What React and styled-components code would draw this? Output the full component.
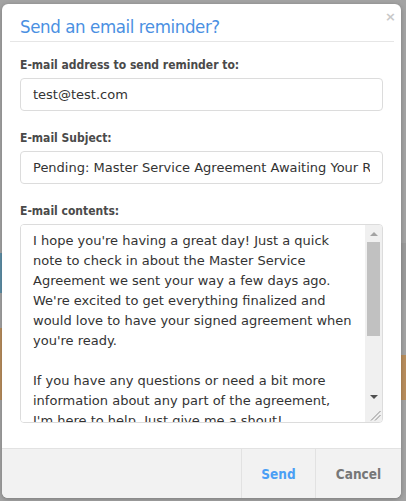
import React from "react";
import styled, { createGlobalStyle } from "styled-components";

const Global = createGlobalStyle`
  html, body { margin: 0; padding: 0; }
  body {
    width: 406px;
    height: 501px;
    overflow: hidden;
    font-family: "DejaVu Sans", Verdana, sans-serif;
    background:
      linear-gradient(to bottom,
        #a3a3a3 0, #a3a3a3 253px,
        #5d8ea6 253px, #5d8ea6 293px,
        #a3a3a3 293px, #a3a3a3 328px,
        #b88d5c 328px, #b88d5c 400px,
        #a3a3a3 400px) left top / 203px 100% no-repeat,
      linear-gradient(to bottom,
        #a3a3a3 0, #a3a3a3 243px,
        #9a9a9a 243px, #9a9a9a 300px,
        #a3a3a3 300px, #a3a3a3 355px,
        #b88d5c 355px, #b88d5c 400px,
        #a3a3a3 400px) right top / 203px 100% no-repeat;
  }
`;

const condensed = `"DejaVu Sans Condensed", "DejaVu Sans", Verdana, sans-serif`;
const regular = `"DejaVu Sans", Verdana, sans-serif`;

const Backdrop = styled.div`
  padding: 4px 5px 3px 2px;
  box-sizing: border-box;
  height: 501px;
`;

const Modal = styled.div`
  background: #fff;
  border-radius: 6px;
  box-shadow: 0 1px 4px rgba(0, 0, 0, 0.25);
  height: 494px;
  display: flex;
  flex-direction: column;
  overflow: hidden;
`;

const Header = styled.div`
  position: relative;
  margin: 0 7px 0 8px;
  padding: 12px 10px 3px 10px;
  border-bottom: 1px solid #e6e6e6;
`;

const Title = styled.h2`
  margin: 0;
  font-family: ${condensed};
  font-size: 18.5px;
  letter-spacing: -0.4px;
  font-weight: normal;
  line-height: 22px;
  color: #4a90e2;
`;

const Close = styled.span`
  position: absolute;
  right: -2px;
  top: 6px;
  font-family: ${regular};
  font-size: 13px;
  line-height: 13px;
  color: #c8c8c8;
  font-weight: bold;
`;

const Body = styled.div`
  flex: 1;
  padding: 15px 18px 0 18px;
  display: flex;
  flex-direction: column;
`;

const Label = styled.label`
  display: block;
  font-family: ${condensed};
  font-size: 12px;
  font-weight: bold;
  color: #4a4a4a;
  line-height: 16px;
  margin-bottom: 5px;
`;

const Field = styled.div`
  margin-bottom: ${(p) => p.$gap}px;
`;

const Input = styled.input`
  display: block;
  box-sizing: border-box;
  width: 100%;
  height: 33px;
  padding: 0 12px;
  border: 1px solid #dcdcdc;
  border-radius: 4px;
  font-family: ${regular};
  font-size: 13px;
  color: #333;
  outline: none;
  background: #fff;
`;

const TextBox = styled.div`
  display: flex;
  height: 199px;
  box-sizing: border-box;
  border: 1px solid #dcdcdc;
  border-radius: 4px;
  overflow: hidden;
`;

const TextArea = styled.textarea`
  flex: 1;
  min-width: 0;
  box-sizing: border-box;
  height: 100%;
  padding: 6px 13px 6px 12px;
  margin: 0;
  border: none;
  font-family: ${regular};
  font-size: 13px;
  line-height: 20px;
  color: #333;
  outline: none;
  resize: none;
  overflow: hidden;
  background: #fff;
`;

const ScrollBar = styled.div`
  width: 17px;
  flex: none;
  display: flex;
  flex-direction: column;
  background: #f0f0f0;
`;

const ArrowButton = styled.div`
  height: 17px;
  flex: none;
  display: flex;
  align-items: center;
  justify-content: center;
`;

const Arrow = styled.span`
  width: 0;
  height: 0;
  border-left: 4px solid transparent;
  border-right: 4px solid transparent;
  ${(p) =>
    p.$dir === "up"
      ? `border-bottom: 4px solid ${p.$color};`
      : `border-top: 4px solid ${p.$color};`}
`;

const Track = styled.div`
  flex: 1;
  display: flex;
  flex-direction: column;
  padding: 0 2px;
`;

const Thumb = styled.div`
  height: 94px;
  background: #c1c1c1;
`;

const Corner = styled.div`
  height: 17px;
  flex: none;
  display: flex;
  align-items: flex-end;
  justify-content: flex-end;
`;

const Footer = styled.div`
  height: 49px;
  border-top: 1px solid #e2e2e2;
  background: #f2f2f2;
  display: flex;
  justify-content: flex-end;
`;

const FooterButton = styled.button`
  width: ${(p) => p.$w}px;
  border: none;
  border-left: 1px solid #e2e2e2;
  background: transparent;
  font-family: ${condensed};
  font-size: 13.5px;
  font-weight: bold;
  color: ${(p) => p.$color};
  cursor: pointer;
  padding: 0;
`;

const message = `I hope you're having a great day! Just a quick note to check in about the Master Service Agreement we sent your way a few days ago. We're excited to get everything finalized and would love to have your signed agreement when you're ready.

If you have any questions or need a bit more information about any part of the agreement, I'm here to help. Just give me a shout!

Thanks so much for your time!

Best regards,
John`;

export default function App() {
  return (
    <>
      <Global />
      <Backdrop>
        <Modal>
          <Header>
            <Title>Send an email reminder?</Title>
            <Close>×</Close>
          </Header>
          <Body>
            <Field $gap={19}>
              <Label>E-mail address to send reminder to:</Label>
              <Input defaultValue="test@test.com" />
            </Field>
            <Field $gap={19}>
              <Label>E-mail Subject:</Label>
              <Input defaultValue="Pending: Master Service Agreement Awaiting Your Review" />
            </Field>
            <Field $gap={0}>
              <Label>E-mail contents:</Label>
              <TextBox>
                <TextArea defaultValue={message} />
                <ScrollBar>
                  <ArrowButton>
                    <Arrow $dir="up" $color="#a3a3a3" />
                  </ArrowButton>
                  <Track>
                    <Thumb />
                  </Track>
                  <ArrowButton>
                    <Arrow $dir="down" $color="#505050" />
                  </ArrowButton>
                  <Corner>
                    <svg width="17" height="17" viewBox="0 0 17 17">
                      <path d="M6 15.5 L15.5 6 M10 15.5 L15.5 10" stroke="#8c8c8c" strokeWidth="1" fill="none" />
                    </svg>
                  </Corner>
                </ScrollBar>
              </TextBox>
            </Field>
          </Body>
          <Footer>
            <FooterButton $w={74} $color="#4a9ff5">Send</FooterButton>
            <FooterButton $w={86} $color="#777">Cancel</FooterButton>
          </Footer>
        </Modal>
      </Backdrop>
    </>
  );
}
